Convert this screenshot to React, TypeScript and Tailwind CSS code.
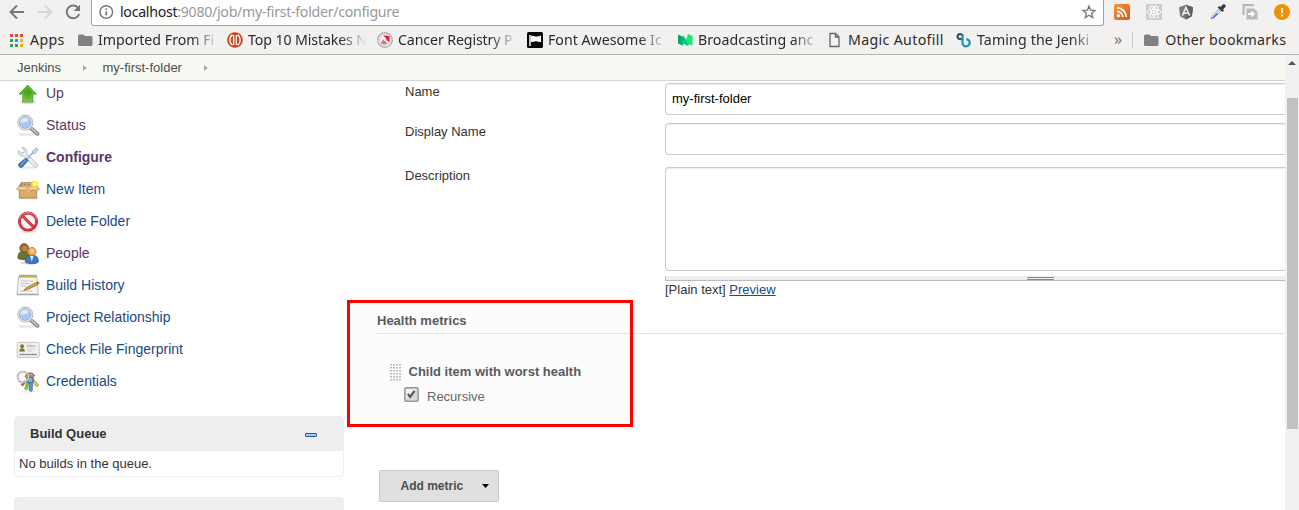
import React from "react";

type IconName = "up" | "search" | "configure" | "box" | "delete" | "people" | "history" | "card" | "keys";

function TaskIcon({ name }: { name: IconName }) {
  const common = { width: 24, height: 24, viewBox: "0 0 24 24", fill: "none", className: "block shrink-0" } as const;
  switch (name) {
    case "up":
      return (
        <svg {...common}>
          <defs>
            <linearGradient id="upg" x1="0" y1="0" x2="0" y2="1">
              <stop offset="0" stopColor="#4fae1c" />
              <stop offset="0.5" stopColor="#4aa81a" />
              <stop offset="1" stopColor="#78cc3e" />
            </linearGradient>
          </defs>
          <ellipse cx="12" cy="21.5" rx="8" ry="1.6" fill="#000" opacity=".12" />
          <path d="M11.7 4 20.3 13H16.9V21H6.8V13H3.2Z" fill="url(#upg)" stroke="#3a8f14" strokeWidth=".8" strokeLinejoin="round" />
          <path d="M11.7 5.5 18.2 12.1H15.9V20.1H7.8V12.1H5.2Z" stroke="#a2e27c" strokeWidth=".6" opacity=".7" />
        </svg>
      );
    case "search":
      return (
        <svg {...common}>
          <ellipse cx="11" cy="21.5" rx="9" ry="1.8" fill="#000" opacity=".08" />
          <path d="m15 15.4 6.4 5.4" stroke="#757575" strokeWidth="3.8" strokeLinecap="round" />
          <path d="m15.1 15.3 6.1 5.2" stroke="#c4c4c4" strokeWidth="2" strokeLinecap="round" />
          <circle cx="9.3" cy="9.6" r="7.5" fill="#a9c8ec" stroke="#9da2a8" strokeWidth=".9" />
          <circle cx="9.3" cy="9.6" r="6.6" stroke="#eceff3" strokeWidth="1.2" />
          <circle cx="9.3" cy="9.6" r="5.7" stroke="#7fa4cf" strokeWidth=".7" />
          <path d="M4.4 10a5 5 0 0 1 8.6-3.9c-1 2.7-4.4 3.6-8.6 3.9Z" fill="#dbe9f9" />
        </svg>
      );
    case "configure":
      return (
        <svg {...common}>
          <ellipse cx="12" cy="22.4" rx="10" ry="1.4" fill="#000" opacity=".08" />
          <g transform="translate(0 .6)">
            <path d="M6 1.9 8.4 4.4 7.9 6.9 5.1 7.6 2.6 5.2C1.9 8.9 4.3 11 7.6 10.4L18.4 21.2c1.6 1.4 4-.8 2.7-2.6L10.6 8C11.4 4.6 9.4 1.6 6 1.9Z" fill="#eceded" stroke="#a9acaa" strokeWidth=".8" />
            <path d="m11.6 12.9 5.6-6.3" stroke="#9db0c5" strokeWidth="1.6" />
            <path d="m16 6.3 3.3-3.5c1.5-1 3.4.3 2.6 2.2l-3.6 3.4Z" fill="#c9d7e5" stroke="#8ba0b8" strokeWidth=".7" />
            <path d="m10 12.4 2.4 2.3-5.9 6.6c-1.9 1.8-5.2-.8-3.5-3.3Z" fill="#4a7dbd" stroke="#2c5a97" strokeWidth=".8" />
            <path d="m9.6 14.2-5.2 5.4" stroke="#9bbce6" strokeWidth=".9" />
          </g>
        </svg>
      );
    case "box":
      return (
        <svg {...common}>
          <path d="M3 20.8h19v1.5H3Z" fill="#000" opacity=".12" />
          <path d="M5.2 5.4h14.6l1.8 4.8H2.6Z" fill="#a87b42" stroke="#b98a50" strokeWidth=".7" />
          <path d="M6.4 6.2h10.4v3.2H5.8Z" fill="#cdbc9c" />
          <path d="M7.6 8.2a1.6 1.6 0 0 1 3 0M11.8 8.4a1.6 1.6 0 0 1 3 0" stroke="#8b673a" strokeWidth=".9" />
          <path d="M3.3 10.8h17.4V21H3.3Z" fill="#dcab6c" stroke="#ad7735" strokeWidth=".8" />
          <path d="M.5 12.2 3.3 9.2h17.4l2.8 3-2.4 1.2H3.2Z" fill="#efcb98" stroke="#b98548" strokeWidth=".7" />
          <path d="M10.1 9.6h3.7V15h-3.7Z" fill="#e2b479" />
          <circle cx="18.6" cy="7.3" r="4" fill="#ffe92d" opacity=".5" />
          <circle cx="18.6" cy="7.3" r="2.7" fill="#ffe926" />
          <circle cx="18.6" cy="7.3" r="1.2" fill="#fff" />
        </svg>
      );
    case "delete":
      return (
        <svg {...common}>
          <ellipse cx="12" cy="22.6" rx="8" ry="1.2" fill="#000" opacity=".12" />
          <circle cx="12" cy="12.6" r="8.6" fill="#f6f4f4" stroke="#bd2731" strokeWidth="2.8" />
          <circle cx="12" cy="12.6" r="8.6" stroke="#df3a42" strokeWidth="1.8" />
          <path d="m6 6.600 12 12" stroke="#c9212b" strokeWidth="2.8" />
          <path d="m6 6.600 12 12" stroke="#e0454c" strokeWidth="1.6" />
          <path d="M3.500 10.400a8.700 8.700 0 0 1 17 0" stroke="#f0a0a2" strokeWidth="1" opacity=".7" />
        </svg>
      );
    case "people":
      return (
        <svg {...common}>
          <ellipse cx="13" cy="22" rx="9" ry="1.4" fill="#000" opacity=".15" />
          <path d="M2 17.5c-.3-5 1.7-7.5 6-7.5 4 0 6.4 3.5 5.8 7.5-3 1.4-8.6 1.4-11.8 0Z" fill="#6a762d" stroke="#4d591d" strokeWidth=".8" />
          <circle cx="8.2" cy="7" r="4.4" fill="#9a6636" stroke="#7c5029" strokeWidth=".8" />
          <circle cx="8.8" cy="7.6" r="2.8" fill="#b88450" />
          <path d="M9.4 21c-.3-4.8 1.7-7 6.1-7 4.6 0 7 2.3 6.8 7-3 2.2-9.8 2.3-12.9 0Z" fill="#3f78c0" stroke="#285794" strokeWidth=".8" />
          <circle cx="15.8" cy="10.6" r="4.2" fill="#eda044" stroke="#bd772a" strokeWidth=".8" />
          <circle cx="16.2" cy="10" r="2.5" fill="#fcc57b" />
          <path d="m14 15 1.8 5.4 1.8-5.4Z" fill="#e6eef7" />
        </svg>
      );
    case "history":
      return (
        <svg {...common}>
          <path d="M2.6 3.6h18.2l1.5 17.6H1Z" fill="#f4f4f3" stroke="#aaa" strokeWidth=".8" />
          <path d="M1 21.2h21.5v1.1H1Z" fill="#777" opacity=".6" />
          <path d="M3 2.4h17.6v2.2H3Z" fill="#c0b44c" />
          <path d="M3.4 2.4h17" stroke="#827b2c" strokeWidth="1.4" strokeDasharray="1 1" />
          <path d="M4.8 8h12M4.6 10.5h9M4.4 13h6M4.2 18h12" stroke="#c0c0c0" strokeWidth=".9" />
          <path d="m7.8 17.4 2.8-3L20.6 9.4l1.3 2.2-10.2 4.8Z" fill="#d9a13b" stroke="#86612a" strokeWidth=".7" />
          <path d="m20.2 9.4 1.5-.7c1.5-.2 2.5 1.4 1 2.4l-1 .5Z" fill="#df5137" />
        </svg>
      );
    case "card":
      return (
        <svg {...common}>
          <rect x="1.2" y="5.4" width="22" height="15" rx=".8" fill="#efefef" stroke="#b9b9b9" strokeWidth=".8" />
          <circle cx="6" cy="9.3" r="2" fill="#9d6834" />
          <path d="M3.2 14.6c0-4.5 5.7-4.5 5.7 0Z" fill="#6d7a30" />
          <path d="M11 9h8" stroke="#8d8d8d" strokeWidth="1.2" strokeDasharray="2.6 .5" />
          <path d="M11 12h8M11 14h5" stroke="#cacaca" strokeWidth=".8" />
          <path d="M3.4 17.6h17.6" stroke="#848484" strokeWidth="1" />
          <path d="M4 17.2h17" stroke="#848484" strokeWidth="1" strokeDasharray="1 2" />
        </svg>
      );
    case "keys":
      return (
        <svg {...common}>
          <ellipse cx="13" cy="22.4" rx="8" ry="1" fill="#000" opacity=".08" />
          <path d="m15 9.6 7 7.6" stroke="#b3933e" strokeWidth="3.2" />
          <path d="m15 9.6 6.7 7.3" stroke="#e2c667" strokeWidth="2" />
          <path d="M9.5 8c1.5-4.4 7-4.8 9-.6" stroke="#e05448" strokeWidth="1.8" />
          <path d="M10 9.4c1.4-3.6 5.8-4 7.6-.6" stroke="#69bd45" strokeWidth="1.8" />
          <path d="m9.4 12-3.6 4.6" stroke="#e04a48" strokeWidth="2.8" />
          <path d="m12 12.6-2.4 8.2" stroke="#73c33f" strokeWidth="3.2" />
          <circle cx="14.2" cy="11" r="3" fill="#8db0d6" stroke="#4679ad" strokeWidth="1.6" />
          <path d="M13 13.6v7.6l2.4 1.4 1.2-2-.6-1.6.8-1.6-.6-4Z" fill="#5f92c6" stroke="#3f71a5" strokeWidth=".7" />
          <circle cx="7" cy="8" r="5.4" stroke="#8f8f8f" strokeWidth="1.8" />
          <circle cx="7" cy="8" r="5.4" stroke="#ededed" strokeWidth=".9" />
        </svg>
      );
  }
}

const tasks: { icon: IconName; label: string; color: string }[] = [
  { icon: "up", label: "Up", color: "text-[#5c3566]" },
  { icon: "search", label: "Status", color: "text-[#5c3566]" },
  { icon: "configure", label: "Configure", color: "text-[#5c3566] font-bold" },
  { icon: "box", label: "New Item", color: "text-[#204a87]" },
  { icon: "delete", label: "Delete Folder", color: "text-[#204a87]" },
  { icon: "people", label: "People", color: "text-[#5c3566]" },
  { icon: "history", label: "Build History", color: "text-[#204a87]" },
  { icon: "search", label: "Project Relationship", color: "text-[#204a87]" },
  { icon: "card", label: "Check File Fingerprint", color: "text-[#204a87]" },
  { icon: "keys", label: "Credentials", color: "text-[#204a87]" },
];

function FolderIcon() {
  return (
    <svg width="15" height="14" viewBox="0 0 15 14" className="block shrink-0">
      <path d="M0 3Q0 1.5 1.5 1.5H5.5L7 3H13Q14.5 3 14.5 4.5V11.5Q14.5 13 13 13H1.5Q0 13 0 11.5Z" fill="#818181" />
    </svg>
  );
}

function BrowserToolbar() {
  return (
    <div className="flex h-[26px] shrink-0 items-start">
      <div className="flex w-[91px] shrink-0 gap-[12px] pl-[9px] pt-1">
        <svg width="16" height="16" viewBox="0 0 16 16" fill="none" stroke="#777" strokeWidth="1.9"><path d="M15 8H2M8 1.5 1.5 8 8 14.5" /></svg>
        <svg width="16" height="16" viewBox="0 0 16 16" fill="none" stroke="#d5d4d3" strokeWidth="1.9"><path d="M1 8h13M8 1.5 14.5 8 8 14.5" /></svg>
        <svg width="16" height="16" viewBox="0 0 16 16" fill="none" stroke="#777" strokeWidth="2"><path d="M13.3 4.1A6.4 6.4 0 1 0 14.2 10" /><path d="M15 .8V7H8.7Z" fill="#777" stroke="none" /></svg>
      </div>
      <div className="flex h-[26px] w-[1013px] shrink-0 items-start rounded-b-[3px] border-b border-l border-r border-[#a5a3a1] bg-white pl-[7px] pt-1">
        <svg width="16" height="16" viewBox="0 0 16 16" fill="none" stroke="#777" strokeWidth="1.5"><circle cx="7.3" cy="8" r="6.3" /><path d="M7.3 7.2v4.4M7.3 4.3v1.5" strokeWidth="1.7" /></svg>
        <span className="ml-[5px] -mt-px whitespace-nowrap text-[14.2px] leading-[18px] tracking-[-0.3px] text-[#999]"><span className="text-[#222]">localhost</span>:9080/job/my-first-folder/configure</span>
        <svg className="mr-[6px] ml-auto" width="16" height="16" viewBox="0 0 16 16" fill="none" stroke="#777" strokeWidth="1.4"><path d="m8 2.2 1.6 4 4.4.3-3.4 2.8 1.1 4.2L8 11.2l-3.7 2.3 1.1-4.2L2 6.5l4.4-.3Z" /></svg>
      </div>
      <div className="flex pl-[10px] pt-1 gap-4">
        <svg width="16" height="16" viewBox="0 0 16 16"><defs><linearGradient id="rss" y2="1"><stop stopColor="#f8983d" /><stop offset="1" stopColor="#db571a" /></linearGradient></defs><rect width="16" height="16" rx="2" fill="url(#rss)" /><circle cx="4.4" cy="11.7" r="1.6" fill="#fff" /><path d="M3 7.3a5.8 5.8 0 0 1 5.8 5.8M3 3.8a9.3 9.3 0 0 1 9.3 9.3" fill="none" stroke="#fff" strokeWidth="1.8" /></svg>
        <svg width="16" height="16" viewBox="0 0 16 16"><path fill="#ccc" d="M0 0h16v16H0Z" /><g fill="none" stroke="#fff" strokeWidth=".9"><ellipse cx="8" cy="8" rx="6.8" ry="2.7" /><ellipse cx="8" cy="8" rx="6.8" ry="2.7" transform="rotate(60 8 8)" /><ellipse cx="8" cy="8" rx="6.8" ry="2.7" transform="rotate(120 8 8)" /></g><circle cx="8" cy="8" r="1.4" fill="#fff" /></svg>
        <svg width="16" height="16" viewBox="0 0 16 16"><path d="m8 .8 7 2.5-1.1 9L8 15.5l-5.9-3.2L1 3.3Z" fill="#7c7c7c" /><path d="m8 .8 7 2.5-1.1 9L8 15.5Z" fill="#626262" /><path d="M4.4 11.6 8 3.4l3.6 8.2M5.8 9.2h4.4" fill="none" stroke="#eee" strokeWidth="1.6" /></svg>
        <svg width="16" height="16" viewBox="0 0 16 16"><path d="m.8 15 .8-2.6L9 5.2l1.8 1.8L3.4 14.2Z" fill="#d9e3f5" stroke="#999" strokeWidth=".8" /><path d="m1.8 14.2 4.6-4.8 2.2.2-5 4.4Z" fill="#315ddc" /><path d="m7.6 3.6 1.6-1.6 1.3 1L12.8.6c2-1.2 3.6.6 2.6 2.4L13 5.4l1.1 1.1-1.6 1.6Z" fill="#3c3c44" /></svg>
        <svg width="16" height="16" viewBox="0 0 16 16"><path d="M1.5 11V1.2H12" fill="none" stroke="#b9b9b9" strokeWidth="2.2" /><path d="M4.5 4.5h7.5l3.5 3.5v7.5h-11Z" fill="#b9b9b9" /><path d="M6 9h3.4V6.6l3.8 3.4-3.8 3.4V11H6Z" fill="#fff" /></svg>
        <svg width="16" height="16" viewBox="0 0 16 16"><circle cx="8" cy="8" r="8" fill="#ef9200" /><path d="M7 4h2v5H7Zm0 6.5h2v2H7Z" fill="#fff" /></svg>
      </div>
    </div>
  );
}

function BookmarksBar() {
  const fade = "[mask-image:linear-gradient(to_right,#000_calc(100%_-_27px),transparent)]";
  const text = "ml-[5px] block shrink-0 whitespace-nowrap text-[14.2px] leading-[20px] text-[#2b2b2b]";
  return (
    <div className="flex h-[29px] shrink-0 items-start border-b border-[#b5b3b2] pl-[9px] pt-1 pb-1">
      <div className="flex w-[69px] shrink-0 items-center">
        <svg width="15" height="15" viewBox="0 0 15 15"><path fill="#ef4438" d="M1 1h3v3H1Zm5 0h3v3H6Zm5 0h3v3h-3Z" /><path fill="#31a05c" d="M1 6h3v3H1Zm0 5h3v3H1Zm5 0h3v3H6Z" /><path fill="#3089ef" d="M6 6h3v3H6Z" /><path fill="#f3b116" d="M11 6h3v3h-3Zm0 5h3v3h-3Z" /></svg>
        <span className={`${text} pl-px tracking-[0.35px]`}>Apps</span>
      </div>
      <div className="flex w-[149px] shrink-0 items-center"><FolderIcon /><span className={`${text} ${fade} w-[121px]`}>Imported From Fi</span></div>
      <div className="flex w-[150px] shrink-0 items-center">
        <svg width="16" height="16" viewBox="0 0 16 16"><circle cx="8" cy="8" r="7.8" fill="#c84420" /><path d="M5.6 3C2 4.5 2 11.5 5.6 13M10.4 3c3.6 1.5 3.6 8.5 0 10" fill="none" stroke="#fff" strokeWidth="1.4" /><path d="M6.7 3v10M9.3 3v10" fill="none" stroke="#fff" strokeWidth="1.2" /></svg>
        <span className={`${text} ${fade} w-[119px] tracking-[-0.12px]`}>Top 10 Mistakes N</span>
      </div>
      <div className="flex w-[150px] shrink-0 items-center">
        <svg width="16" height="16" viewBox="0 0 16 16"><circle cx="8" cy="8" r="7.2" fill="#f2f2f2" stroke="#999" strokeWidth="1.3" strokeDasharray="2 .5" /><circle cx="8" cy="8" r="5.2" fill="none" stroke="#c4c4c4" strokeWidth=".8" /><path d="M6.5 3.5 12.5 4v6L10 8.5 8.5 5.8Z" fill="#e8203f" /><path d="M3.8 11.5 6 7.5l4.5 4-3 1Z" fill="#f2667c" /></svg>
        <span className={`${text} ${fade} w-[119px] tracking-[-0.12px]`}>Cancer Registry P</span>
      </div>
      <div className="flex w-[151px] shrink-0 items-center">
        <svg width="16" height="16" viewBox="0 0 16 16"><rect width="16" height="16" rx="1.5" fill="#080808" /><path d="M3 3v11" stroke="#fff" strokeWidth="1.5" /><path d="M4 4c3-1 4 1 6 .5L14 3.7v6c-3 1-4-.8-6-.3L4 10Z" fill="#fff" /></svg>
        <span className={`${text} ${fade} w-[119px]`}>Font Awesome Ic</span>
      </div>
      <div className="flex w-[149px] shrink-0 items-center">
        <svg width="15" height="16" viewBox="0 0 15 16"><path d="m0 2.500 5 2.300v9L0 11.500Z" fill="#00ab6c" /><path d="m5 3 6 9-1 2L4 11Z" fill="#00c87b" /><path d="m10 2 4.500 2v9.500L10 12 8 8Z" fill="#14e77c" /></svg>
        <span className={`${text} ${fade} w-[122px] tracking-[0.02px]`}>Broadcasting anc</span>
      </div>
      <div className="flex w-[129px] shrink-0 items-center"><svg width="15" height="16" viewBox="0 0 15 16" fill="none" stroke="#666" strokeWidth="1.3"><path d="M3 1.5h5.500L12 5v9.500H3ZM8.500 1.500V5H12" /></svg><span className={`${text} pl-px tracking-[0.33px]`}>Magic Autofill</span></div>
      <div className="flex w-[158px] shrink-0 items-center"><svg width="16" height="16" viewBox="0 0 16 16" fill="none" strokeWidth="2.2"><path d="M6 6.400A2.600 2.600 0 1 1 6.600 3.800" stroke="#26526e" /><path d="M6.500 2.500V11a3.600 3.600 0 1 0 3.800-3.800" stroke="#1a95b3" /></svg><span className={`${text} ${fade} w-[122px] tracking-[0.12px]`}>Taming the Jenki</span></div>
      <span className="mr-[10px] text-[16px] leading-[18px] text-[#777]">»</span>
      <span className="mr-[11px] mt-0.5 h-4 w-px bg-[#c9c8c7]" />
      <div className="flex items-center"><FolderIcon /><span className={`${text} pl-px tracking-[0.24px]`}>Other bookmarks</span></div>
    </div>
  );
}

function Breadcrumb() {
  return (
    <div className="flex h-[26px] shrink-0 items-center border-b border-[#d3d7cf] bg-[#f6faf2] pl-[17px] text-[13px] text-[#4d4d4d]">
      <span className="w-[66px]">Jenkins</span>
      <svg width="19.5" height="8" viewBox="0 0 19.5 8"><path d="m0 1 4 3-4 3Z" fill="#aaa" /></svg>
      <span className="w-[101.5px]">my-first-folder</span>
      <svg width="4" height="8" viewBox="0 0 4 8"><path d="m0 1 4 3-4 3Z" fill="#aaa" /></svg>
    </div>
  );
}

function Sidebar() {
  return (
    <aside className="w-[347px] shrink-0">
      <nav className="h-[335px] pl-4">
        {tasks.map((task) => (
          <div key={task.label} className={`flex h-8 items-start ${task.color}`}>
            <TaskIcon name={task.icon} />
            <a className="ml-1.5 mt-0.5 text-[14px] leading-5 whitespace-nowrap">{task.label}</a>
          </div>
        ))}
      </nav>
      <section className="ml-[14px] h-[61px] w-[330px] overflow-hidden rounded-[4px] border border-[#eee] bg-white text-[13px] text-[#333]">
        <header className="flex h-[34px] items-center justify-between bg-[#eee] pr-[26px] pl-[15px]">
          <h2 className="-mt-px font-bold text-[#333]">Build Queue</h2>
          <span className="mt-0.5 h-1 w-3 rounded-[1px] border border-[#2b5ba0] bg-[#aac8ed]" />
        </header>
        <p className="pt-px pl-1 leading-6">No builds in the queue.</p>
      </section>
      <section className="ml-[14px] mt-5 h-10 w-[330px] rounded-t-[4px] bg-[#eee]" />
    </aside>
  );
}

function GeneralSettings() {
  const label = "-mt-px w-[260px] shrink-0 text-[#333]";
  const input = "h-8 flex-1 rounded-l-[4px] border border-r-0 border-[#ccc] bg-white px-1.5 pb-0.5 text-[13px] leading-5 text-black shadow-[inset_0_1px_1px_rgba(0,0,0,0.075)] outline-none";
  return (
    <div className="h-[219px] pl-[58px] text-[13px]">
      <div className="flex h-10 pt-0.5"><label htmlFor="name" className={label}>Name</label><input id="name" className={input} defaultValue="my-first-folder" /></div>
      <div className="flex h-11 pt-0.5"><label htmlFor="display" className={label}>Display Name</label><input id="display" className={input} /></div>
      <div className="flex h-[108px] pt-0.5"><label htmlFor="description" className={label}>Description</label><textarea id="description" className={`${input} h-[104px] resize-none`} /></div>
      <div className="ml-[260px] mt-[3px] flex h-[5px] justify-center border-b border-l border-[#bbb] bg-[#eee] pl-[129px]">
        <div className="mt-px h-[3px] w-[27px] border-t border-b border-[#888]" />
      </div>
      <div className="ml-[260px] text-[#333] leading-[18px]">[Plain text] <a className="text-[#204a87] underline">Preview</a></div>
    </div>
  );
}

function HealthMetrics() {
  return (
    <div className="relative text-[13px] text-[#5a5a5a]">
      <div className="absolute left-0 top-0 h-[127px] w-[286px] bg-[#fcfcfc]" />
      <div className="relative pt-[11px]">
        <h2 className="ml-[30px] h-[23px] border-b border-[#e2e2e2] font-bold leading-[20px]">Health metrics</h2>
        <div className="mt-[29px] flex h-[18px] items-start pl-[43px]">
          <svg width="12" height="18" viewBox="0 0 12 18" fill="#bcbcbc">
            {Array.from({ length: 24 }, (_, i) => <rect key={i} x={(i % 4) * 3} y={Math.floor(i / 4) * 3 + 1} width="2" height="1.5" />)}
          </svg>
          <strong className="ml-[6.5px] pt-px leading-[16px]">Child item with worst health</strong>
        </div>
        <label className="mt-[6px] flex h-[22px] items-start pl-[57px] text-[#666]">
          <svg width="15" height="15" viewBox="0 0 15 15"><rect x=".8" y=".8" width="13.4" height="13.4" rx="1.5" fill="#d8d8d8" stroke="#999" strokeWidth="1.5" /><path d="M2 2h10L2 12Z" fill="#f2f2f2" /><path d="m3.8 6.8 2.3 3 4.4-6" fill="none" stroke="#555" strokeWidth="2.1" /></svg>
          <span className="ml-2 leading-[20px]">Recursive</span>
        </label>
      </div>
      <div className="pointer-events-none absolute left-0 top-0 h-[127px] w-[286px] border-[3px] border-[#f00]" />
      <button className="ml-8 mt-[61px] flex h-8 w-[120px] items-center rounded-[1px] border border-[#ccc] bg-[#e0e0e0] pl-[20.5px] text-[12px] font-bold text-[#4d4d4d]">
        Add metric <svg className="ml-[18.5px]" width="8" height="5" viewBox="0 0 8 5"><path d="M0 0h7L3.5 4Z" fill="#000" /></svg>
      </button>
    </div>
  );
}

export default function App() {
  return (
    <div className="flex h-[510px] w-[1299px] flex-col overflow-hidden bg-white font-['Liberation_Sans',sans-serif]">
      <div className="shrink-0 bg-[#f2f1f0] font-['Noto_Sans',sans-serif]"><BrowserToolbar /><BookmarksBar /></div>
      <div className="flex min-h-0 flex-1">
        <div className="w-[1285px] shrink-0">
          <Breadcrumb />
          <main className="flex h-[429px] overflow-hidden">
            <Sidebar />
            <div className="min-w-0 flex-1"><GeneralSettings /><HealthMetrics /></div>
          </main>
        </div>
        <div className="flex w-[14px] flex-col items-center bg-[#f1f1f1] pt-[6px]">
          <svg width="8" height="4" viewBox="0 0 8 4"><path d="m0 4 4-4 4 4Z" fill="#505050" /></svg>
          <div className="mt-[33px] h-[331px] w-[11px] bg-[#c1c1c1]" />
        </div>
      </div>
    </div>
  );
}
